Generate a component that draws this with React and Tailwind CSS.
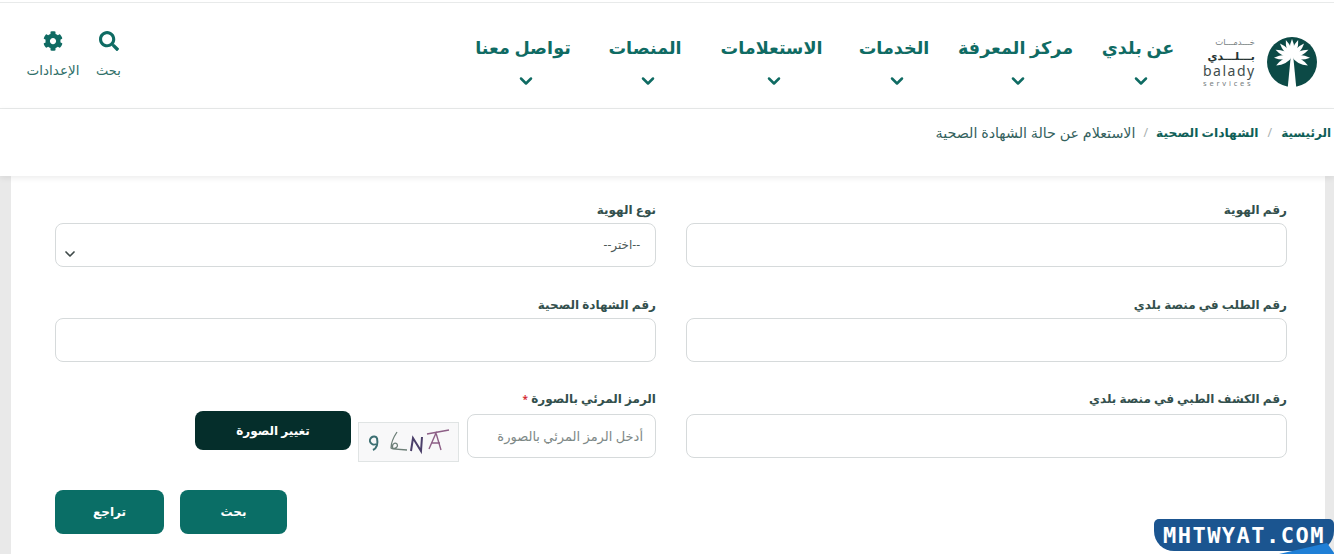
import { ChevronDown } from 'lucide-react';
import { FaCog, FaSearch } from 'react-icons/fa';

const navItems = [
  { label: 'عن بلدي', width: 'w-[70px]' },
  { label: 'مركز المعرفة', width: 'w-[105px]' },
  { label: 'الخدمات', width: 'w-[68px]' },
  { label: 'الاستعلامات', width: 'w-[107px]' },
  { label: 'المنصات', width: 'w-[76px]' },
  { label: 'تواصل معنا', width: 'w-[98px]' },
];

function PalmLogo() {
  const fronds = [-118, -92, -66, -42, -20, 0, 20, 42, 66, 92, 118];
  return (
    <svg width="52" height="52" viewBox="0 0 52 52">
      <circle cx="26" cy="26" r="25" fill="#0c4a46" />
      {fronds.map((a) => (
        <path key={a} d="M26 21 Q21.5 13 26 3 Q30.5 13 26 21Z" fill="#fff" transform={`rotate(${a} 26 21)`} />
      ))}
      <path d="M24.8 20h2.4l3 31h-8.4z" fill="#fff" />
    </svg>
  );
}

function Field({ label, labelClass = 'mb-[4px]', children }) {
  return (
    <div className="flex flex-col">
      <label className={`text-[12px] leading-[18px] font-semibold text-[#33504d] ${labelClass}`}>{label}</label>
      {children}
    </div>
  );
}

function TextInput({ placeholder, className = 'w-full' }) {
  return (
    <input
      placeholder={placeholder}
      className={`h-[44px] rounded-lg border border-[#d6dadb] bg-white px-3 text-[13px] placeholder:text-[#7d8886] ${className}`}
    />
  );
}

export default function App() {
  return (
    <div dir="rtl" className="h-[554px] w-[1334px] overflow-hidden relative bg-[#e9e9e9] font-['Noto_Sans','DejaVu_Sans',sans-serif]">
      <div className="h-[2px] bg-white" />
      <header className="h-[107px] bg-white border-t border-b border-[#e8eaea] flex justify-between pr-[16px] pl-[26px]">
        <div className="flex">
          <div className="flex items-start gap-[11px] pt-[33px] ml-[30px]">
            <PalmLogo />
            <div className="w-[52px] text-[#3f4d4c] leading-none">
              <div className="text-[8.5px] leading-[12px] whitespace-nowrap text-[#77807f]">خـــدمـــات</div>
              <div className="text-[11px] leading-[15px] whitespace-nowrap font-semibold text-[#263534]">بـــلـــدي</div>
              <div dir="ltr" className="text-[14px] leading-[16px] tracking-[1.5px]">balady</div>
              <div dir="ltr" className="text-[7.5px] leading-[9px] tracking-[2.8px] text-[#77807f]">services</div>
            </div>
          </div>
          <nav className="flex gap-[35px] pt-[29px]">
            {navItems.map((item) => (
              <div key={item.label} className={`flex flex-col items-center ${item.width}`}>
                <span className="text-[17.6px] leading-[30px] font-semibold text-[#0f6b63] whitespace-nowrap">{item.label}</span>
                <ChevronDown size={20} strokeWidth={3} className="mt-[9px] -mr-[5px] text-[#0f6b63]" />
              </div>
            ))}
          </nav>
        </div>
        <div className="flex gap-[16px] pt-[28px] text-[#0f6b63]">
          <div className="flex flex-col items-center w-[25px]">
            <FaSearch size={20} />
            <span className="mt-[10px] text-[13px] leading-[18px] text-[#2f6f69]">بحث</span>
          </div>
          <div className="flex flex-col items-center w-[54px]">
            <FaCog size={20} />
            <span className="mt-[10px] text-[13.5px] leading-[18px] text-[#2f6f69] whitespace-nowrap">الإعدادات</span>
          </div>
        </div>
      </header>

      <div className="h-[67px] bg-white shadow-[0_2px_6px_rgba(0,0,0,0.08)] relative z-10 flex items-start pr-[3px] pt-[15px] text-[12.3px] leading-[18px] text-[#0f5f58]">
        <span className="text-[12px] font-semibold">الرئيسية</span>
        <span className="mx-[9px] text-[#a9b1b0]">/</span>
        <span className="font-semibold">الشهادات الصحية</span>
        <span className="mx-[8px] text-[#a9b1b0]">/</span>
        <span className="text-[14.3px] text-[#33615d]">الاستعلام عن حالة الشهادة الصحية</span>
      </div>

      <main className="mr-[9px] ml-[11px] h-[378px] bg-white pr-[38px] pl-[44px] pt-[25px]">
        <div className="grid grid-cols-2 gap-x-[30px] gap-y-[29px]">
          <Field label="رقم الهوية">
            <TextInput />
          </Field>
          <Field label="نوع الهوية">
            <div className="h-[44px] rounded-lg border border-[#d6dadb] bg-white flex items-start justify-between pr-[15px] pl-[6px] pt-[12px] text-[12px] leading-[18px] text-[#4d5a58]">
              <span>--اختر--</span>
              <ChevronDown size={16} strokeWidth={2.5} className="mt-[10px] text-[#3f4a49]" />
            </div>
          </Field>
          <Field label="رقم الطلب في منصة بلدي">
            <TextInput />
          </Field>
          <Field label="رقم الشهادة الصحية">
            <TextInput />
          </Field>
          <Field label="رقم الكشف الطبي في منصة بلدي" labelClass="-mt-[1px] mb-[6px]">
            <TextInput />
          </Field>
          <div>
            <label className="block -mt-[1px] text-[12px] leading-[18px] font-semibold text-[#33504d] mb-[6px]">
              الرمز المرئي بالصورة <span className="text-[10px] text-[#d3242c]">*</span>
            </label>
            <div className="flex items-start">
              <TextInput placeholder="أدخل الرمز المرئي بالصورة" className="w-[189px]" />
              <div dir="ltr" className="mr-[8px] mt-[8px] h-[40px] w-[101px] border border-[#e0e4e4] bg-[#f8f8f9] flex items-center justify-center">
                <svg width="88" height="28" viewBox="0 0 88 28">
                  <path d="M12 10a4 4 0 1 0-1 6M12 10c1 5 0 10-4 12" fill="none" stroke="#3c6f72" strokeWidth="2" />
                  <path d="M32 4c-4 6-6 12-6 16 3 2 8-1 6-4-2-2-6 0-4 5l14 1" fill="none" stroke="#6d7f78" strokeWidth="1.3" />
                  <path d="M46 23 48 10l8 13 1-14" fill="none" stroke="#4b3f6a" strokeWidth="2" />
                  <path d="M64 21 71 5l5 17M66 15h9M62 6l22-4" fill="none" stroke="#8d5f86" strokeWidth="1.4" />
                </svg>
              </div>
              <button className="mr-[7px] -mt-[3px] h-[39px] w-[156px] rounded-lg bg-[#052e2b] text-white text-[12px] font-semibold">
                تغيير الصورة
              </button>
            </div>
          </div>
        </div>
        <div className="mt-[28px] flex justify-end gap-[16px]">
          <button className="h-[44px] w-[107px] rounded-lg bg-[#0a6e66] text-white text-[12px] font-semibold">بحث</button>
          <button className="h-[44px] w-[109px] rounded-lg bg-[#0a6e66] text-white text-[12px] font-semibold">تراجع</button>
        </div>
      </main>

      {/* watermark */}
      <div dir="ltr" className="absolute left-[1154px] top-[519px] h-[32px] w-[180px] rounded-b-[20px] rounded-t-[5px] bg-[#1b5590] flex items-center justify-center z-20 font-['DejaVu_Sans_Mono',monospace] text-[22px] font-bold tracking-[1.5px] text-white">
        MHTWYAT.COM
      </div>
      <div className="absolute left-[1279px] top-[543px] z-30 h-0 w-0 border-l-[48px] border-r-[8px] border-b-[11px] border-transparent border-b-[#1f7fd6]" />
    </div>
  );
}
